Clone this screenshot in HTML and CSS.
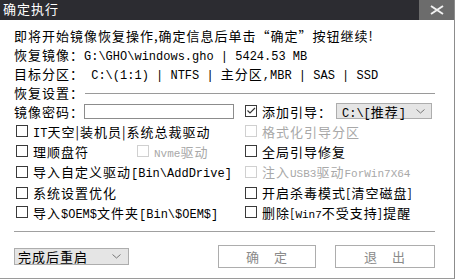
FILE: index.html
```html
<!DOCTYPE html>
<html lang="zh-CN">
<head>
<meta charset="utf-8">
<title>确定执行</title>
<link rel="stylesheet" href="styles.css">
</head>
<body>
<div class="window">
  <div class="titlebar">
    <span class="title">确定执行</span>
    <div class="close">
      <svg width="14" height="10" viewBox="0 0 14 10"><path d="M1 1 L13 9 M13 1 L1 9" stroke="#f2f2f2" stroke-width="2" fill="none"/></svg>
    </div>
  </div>
  <div class="content">
    <div class="info">
      <p>即将开始镜像恢复操作,确定信息后单击“确定”按钮继续!</p>
      <p>恢复镜像：<span class="mono">G:\GHO\windows.gho | 5424.53 MB</span></p>
      <p>目标分区：<span class="mono">&nbsp;C:\(1:1) | NTFS | </span>主分区<span class="mono">,MBR | SAS | SSD</span></p>
    </div>
    <div class="legend"><span class="legend-text">恢复设置：</span><div class="rule"></div></div>
    <div class="grid">
      <div class="cell">
        <span class="label">镜像密码：</span><div class="input"></div>
      </div>
      <div class="cell right">
        <span class="cb checked"><svg width="10" height="10" viewBox="0 0 10 10"><path d="M1.5 4.5 L4 7 L9 2" stroke="#333" stroke-width="1.2" fill="none"/></svg></span>
        <span class="label">添加引导：</span>
        <div class="select small"><span><span class="mono">C:\[</span>推荐<span class="mono">]</span></span><svg class="chev" width="9" height="5" viewBox="0 0 9 5"><path d="M0.5 0.5 L4.5 4 L8.5 0.5" stroke="#777" fill="none"/></svg></div>
      </div>

      <div class="cell"><span class="cb"></span><span class="label"><span class="mono">IT</span>天空|装机员|系统总裁驱动</span></div>
      <div class="cell right disabled"><span class="cb"></span><span class="label">格式化引导分区</span></div>

      <div class="cell">
        <div class="item-fixed"><span class="cb"></span><span class="label">理顺盘符</span></div>
        <div class="item disabled"><span class="cb"></span><span class="label"><span class="mono sm">Nvme</span>驱动</span></div>
      </div>
      <div class="cell right"><span class="cb"></span><span class="label">全局引导修复</span></div>

      <div class="cell"><span class="cb"></span><span class="label">导入自定义驱动<span class="mono">[Bin\AddDrive]</span></span></div>
      <div class="cell right disabled"><span class="cb"></span><span class="label">注入<span class="mono sm">USB3</span>驱动<span class="mono sm">ForWin7X64</span></span></div>

      <div class="cell"><span class="cb"></span><span class="label">系统设置优化</span></div>
      <div class="cell right"><span class="cb"></span><span class="label">开启杀毒模式[清空磁盘]</span></div>

      <div class="cell"><span class="cb"></span><span class="label">导入<span class="mono">$OEM$</span>文件夹<span class="mono">[Bin\$OEM$]</span></span></div>
      <div class="cell right"><span class="cb"></span><span class="label">删除[<span class="mono sm">Win7</span>不受支持]提醒</span></div>
    </div>
    <div class="sep"></div>
    <div class="footer">
      <div class="select big"><span>完成后重启</span><svg class="chev" width="9" height="5" viewBox="0 0 9 5"><path d="M0.5 0.5 L4.5 4 L8.5 0.5" stroke="#777" fill="none"/></svg></div>
      <div class="buttons">
        <div class="btn ok">确　定</div>
        <div class="btn exit">退　出</div>
      </div>
    </div>
  </div>
</div>
</body>
</html>
```
FILE: styles.css
```css
html, body {
  margin: 0;
  padding: 0;
  background: #ffffff;
}
body {
  font-family: "Noto Sans CJK SC", sans-serif;
  font-size: 13px;
  letter-spacing: 1px;
  color: #000;
}
.window {
  width: 454px;
  height: 278px;
  border-right: 1px solid #8c8c8c;
  border-bottom: 1px solid #9a9a9a;
  background: #fff;
  display: flex;
  flex-direction: column;
}
.titlebar {
  height: 20px;
  flex: none;
  background: #2c2c31;
  display: flex;
  justify-content: space-between;
}
.title {
  color: #fff;
  line-height: 18px;
  padding-left: 3px;
}
.close {
  width: 35px;
  background: #6c6c6c;
  display: flex;
  align-items: center;
  justify-content: center;
}
.content {
  padding: 6px 19px 0 14px;
}
.info p {
  margin: 0;
  height: 19px;
  line-height: 19px;
  white-space: nowrap;
}
.mono {
  font-family: "Liberation Mono", monospace;
  font-size: 12px;
  letter-spacing: 0;
}
.mono.sm {
  font-size: 11px;
}
.legend {
  height: 18px;
  display: flex;
  align-items: center;
  gap: 1px;
}
.legend-text {
  flex: none;
}
.legend .rule {
  flex: 1;
  height: 1px;
  margin-top: 2px;
  background-color: #9a9a9a;
}
.grid {
  display: grid;
  grid-template-columns: 229px 1fr;
  grid-template-rows: 20px 20px 20px 21px 21px 18px;
}
.cell {
  display: flex;
  align-items: center;
  white-space: nowrap;
}
.cell.right {
  padding-left: 2px;
}
.cell > .cb, .item-fixed > .cb {
  margin-left: 2px;
}
.cell.right > .cb {
  margin-left: 0;
}
.item-fixed {
  width: 123px;
  display: flex;
  align-items: center;
}
.item {
  display: flex;
  align-items: center;
}
.cb {
  width: 12px;
  height: 12px;
  box-sizing: border-box;
  border: 1px solid #3a3a3a;
  background: #fff;
  margin-right: 5px;
  display: flex;
  align-items: center;
  justify-content: center;
  flex: none;
}
.disabled .cb {
  border-color: #d0d0d0;
}
.disabled .label {
  color: #a8a8a8;
}
.input {
  width: 150px;
  height: 15px;
  box-sizing: border-box;
  border: 1px solid #8c8c8c;
  background: #fff;
}
.select {
  box-sizing: border-box;
  background: #e5e5e5;
  border: 1px solid #adadad;
  display: flex;
  align-items: center;
  justify-content: space-between;
  white-space: nowrap;
}
.select.small {
  width: 96px;
  height: 16px;
  margin-left: 4px;
  padding: 0 6px 0 5px;
}
.select.big {
  width: 115px;
  height: 17px;
  padding: 0 7px 0 3px;
}
.chev {
  flex: none;
}
.sep {
  height: 1px;
  background: #a0a0a0;
  margin-top: 10px;
}
.footer {
  margin-top: 13px;
  height: 23px;
  display: flex;
  align-items: center;
  justify-content: space-between;
}
.buttons {
  display: flex;
  gap: 19px;
}
.btn {
  height: 23px;
  box-sizing: border-box;
  border: 1px solid #adadad;
  background: #fff;
  color: #8a8a8a;
  display: flex;
  align-items: center;
  justify-content: center;
}
.btn.ok {
  width: 98px;
}
.btn.exit {
  width: 100px;
}
```
